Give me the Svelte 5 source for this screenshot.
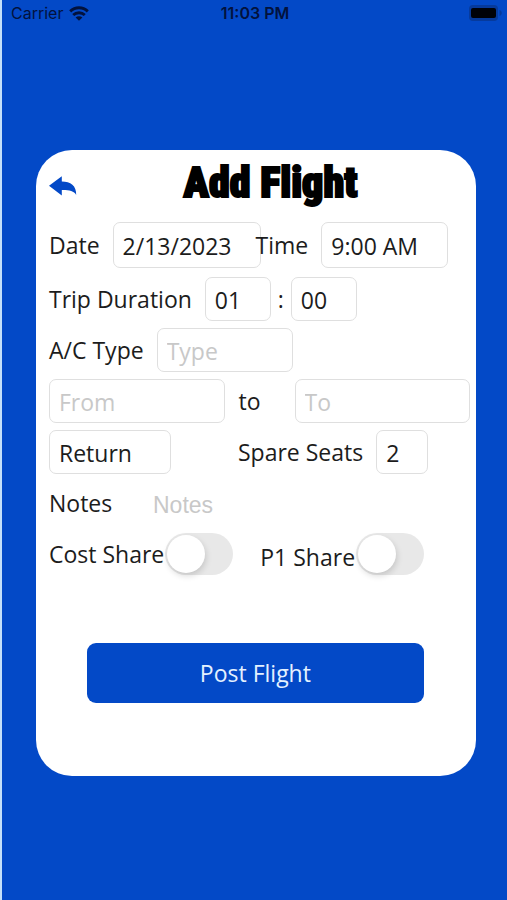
<script lang="ts">
	let date = '2/13/2023';
	let time = '9:00 AM';
	let hours = '01';
	let minutes = '00';
	let aircraft = '';
	let from = '';
	let to = '';
	let tripType = 'Return';
	let spareSeats = '2';
	let notes = '';
	let costShare = false;
	let p1Share = false;

	function postFlight() {
		console.log('post flight', { date, time, hours, minutes, aircraft, from, to, tripType, spareSeats, notes, costShare, p1Share });
	}
</script>

<div class="screen">
	<header class="status">
		<div class="carrier">
			<span>Carrier</span>
			<svg width="20" height="15" viewBox="0 0 20 15" aria-hidden="true">
				<g fill="none" stroke="currentColor" stroke-width="2.9">
					<path d="M1.2 5.4C6.2.5 13.8.5 18.8 5.4" />
					<path d="M4.2 9C7.4 6 12.6 6 15.8 9" />
				</g>
				<path d="M10 14.8 6.6 11.4C8.5 9.7 11.5 9.7 13.4 11.4Z" fill="currentColor" />
			</svg>
		</div>
		<span class="clock">11:03 PM</span>
		<div class="battery">
			<svg width="34" height="16" viewBox="0 0 34 16" aria-hidden="true">
				<rect x="0" y="0" width="29" height="16" rx="4" fill="#063a9c" />
				<path d="M30.5 5C33.5 6 33.5 10 30.5 11Z" fill="#063a9c" />
				<rect x="2" y="3" width="25" height="10" rx="2" fill="#000208" />
			</svg>
		</div>
	</header>

	<main class="card">
		<div class="title">
			<button class="back" type="button" aria-label="Back">
				<svg width="28" height="20" viewBox="0 0 28 20" aria-hidden="true">
					<path d="M0 9.8 12.8.2V5.4C21.5 5.4 27.5 9.4 27.2 18.9 25 15.1 19.5 13.9 12.8 14.1V19.4Z" fill="currentColor" />
				</svg>
			</button>
			<h1>Add Flight</h1>
		</div>

		<form on:submit|preventDefault={postFlight}>
			<div class="row when">
				<label for="date">Date</label>
				<input id="date" class="date" type="text" bind:value={date} />
				<label for="time" class="time-label">Time</label>
				<input id="time" class="time" type="text" bind:value={time} />
			</div>

			<div class="row">
				<label for="hours">Trip Duration</label>
				<input id="hours" class="digits" type="text" bind:value={hours} />
				<span class="colon">:</span>
				<input class="digits minutes" type="text" aria-label="Minutes" bind:value={minutes} />
			</div>

			<div class="row">
				<label for="aircraft">A/C Type</label>
				<input id="aircraft" class="aircraft" type="text" placeholder="Type" bind:value={aircraft} />
			</div>

			<div class="row route">
				<input type="text" placeholder="From" aria-label="From" bind:value={from} />
				<label for="to">to</label>
				<input id="to" type="text" placeholder="To" bind:value={to} />
			</div>

			<div class="row split">
				<div>
					<select class="trip" aria-label="Trip type" bind:value={tripType}>
						<option>Return</option>
						<option>One Way</option>
					</select>
				</div>
				<div class="group">
					<label for="seats">Spare Seats</label>
					<input id="seats" class="seats" type="text" bind:value={spareSeats} />
				</div>
			</div>

			<div class="row notes">
				<label for="notes">Notes</label>
				<textarea id="notes" rows="1" placeholder="Notes" bind:value={notes}></textarea>
			</div>

			<div class="row shares">
				<label for="cost-share">Cost Share</label>
				<input id="cost-share" class="switch" type="checkbox" role="switch" bind:checked={costShare} />
				<label for="p1-share" class="p1">P1 Share</label>
				<input id="p1-share" class="switch" type="checkbox" role="switch" bind:checked={p1Share} />
			</div>

			<button class="post" type="submit">Post Flight</button>
		</form>
	</main>
</div>

<style>
	:global(body) {
		margin: 0;
		background: #0349c7;
	}

	.screen {
		--blue: #0349c7;
		box-sizing: border-box;
		min-height: 100vh;
		padding-bottom: 48px;
		border-left: 2px solid #c4e0fa;
		background: var(--blue);
		color: #1c1c1c;
		font-family: 'Open Sans', 'Noto Sans', sans-serif;
		font-size: 23px;
		line-height: 30px;
	}

	.status {
		display: grid;
		grid-template-columns: 1fr auto 1fr;
		align-items: center;
		height: 26px;
		padding: 0 4px 0 9px;
		color: #02123d;
		font-family: Inter, sans-serif;
		font-size: 16px;
		line-height: 26px;
	}

	.carrier {
		display: flex;
		align-items: center;
		gap: 6px;
	}

	.clock {
		margin-right: 4px;
		font-weight: 600;
	}

	.battery {
		display: flex;
		justify-content: flex-end;
	}

	.card {
		box-sizing: border-box;
		min-height: 626px;
		margin: 124px 31px 0 34px;
		padding: 8px 6px 24px 13px;
		border-radius: 36px;
		background: #fff;
	}

	.title {
		display: grid;
		grid-template-columns: 28px 1fr 28px;
		align-items: center;
		height: 56px;
		margin-bottom: 8px;
	}

	.back {
		display: flex;
		padding: 4px 0;
		border: 0;
		background: none;
		color: var(--blue);
		cursor: pointer;
	}

	h1 {
		margin: 0;
		padding: 0 0 6px 22px;
		color: #000;
		font-family: Impact, 'Roboto Condensed', 'Open Sans Condensed', sans-serif;
		font-size: 42px;
		font-weight: 900;
		line-height: 48px;
		text-align: center;
		white-space: nowrap;
		-webkit-text-stroke: 2px #000;
	}

	form {
		display: flex;
		flex-direction: column;
		gap: 7px;
	}

	.row {
		display: flex;
		align-items: center;
		min-height: 44px;
	}

	label {
		white-space: nowrap;
	}

	input,
	select,
	textarea {
		box-sizing: border-box;
		min-width: 0;
		height: 44px;
		margin: 0;
		padding: 2px 9px 0;
		border: 1px solid #dfdfdf;
		border-radius: 7px;
		background: transparent;
		color: inherit;
		font: inherit;
	}

	select {
		appearance: none;
	}

	::placeholder {
		color: #c8c8c8;
		opacity: 1;
	}

	.when {
		margin-bottom: 2px;
	}

	.when input {
		height: 46px;
	}

	.date {
		width: 148px;
		margin-left: 13px;
	}

	/* the date box runs slightly under this label */
	.time-label {
		margin-left: -5px;
	}

	.time {
		width: 127px;
		margin-left: 13px;
	}

	.digits {
		width: 66px;
		margin-left: 13px;
	}

	.colon {
		width: 20px;
		text-align: center;
	}

	.minutes {
		margin-left: 0;
	}

	.aircraft {
		width: 136px;
		margin-left: 13px;
	}

	.route {
		display: grid;
		grid-template-columns: 1fr 70px 1fr;
	}

	.route label {
		padding-left: 14px;
	}

	.split {
		display: grid;
		grid-template-columns: 189px 1fr;
	}

	.trip {
		width: 122px;
	}

	.group {
		display: flex;
		align-items: center;
	}

	.seats {
		width: 52px;
		margin-left: 13px;
	}

	.notes label {
		width: 94px;
	}

	.notes textarea {
		flex: 1;
		padding: 8px 9px 0;
		border-color: transparent;
		font-family: 'Liberation Sans', sans-serif;
		resize: none;
	}

	.shares .p1 {
		margin-left: 27px;
		padding-top: 6px;
	}

	.switch {
		display: flex;
		align-items: center;
		flex: none;
		width: 68px;
		height: 42px;
		margin-left: 1px;
		padding: 2px;
		border: 0;
		border-radius: 21px;
		background: #e8e8e8;
		appearance: none;
		cursor: pointer;
	}

	.switch::before {
		width: 38px;
		height: 38px;
		border-radius: 50%;
		background: #fff;
		box-shadow: 1px 3px 6px rgba(0, 0, 0, 0.15);
		content: '';
	}

	.switch:checked {
		justify-content: flex-end;
		background: #34c759;
	}

	.post {
		width: 80%;
		height: 60px;
		margin: 60px auto 0 38px;
		border: 0;
		border-radius: 9px;
		background: var(--blue);
		color: #e4f1ff;
		font: inherit;
		cursor: pointer;
	}
</style>
